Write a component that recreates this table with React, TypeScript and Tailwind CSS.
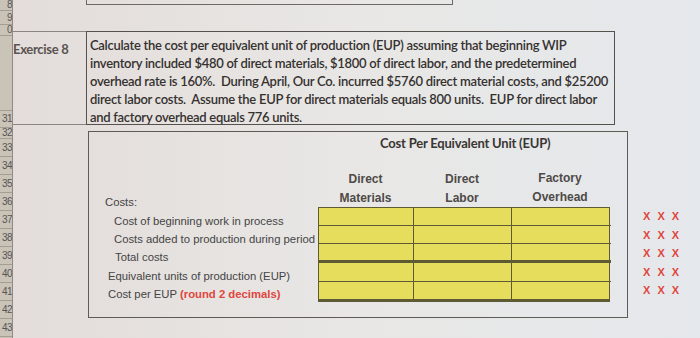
import React from 'react';

const rowNums: { n: string; h: number }[] = [
  { n: '8', h: 11 },
  { n: '9', h: 14 },
  { n: '0', h: 11 },
  { n: '', h: 75 },
  { n: '31', h: 17 },
  { n: '32', h: 11 },
  { n: '33', h: 18 },
  { n: '34', h: 18 },
  { n: '35', h: 18 },
  { n: '36', h: 18 },
  { n: '37', h: 18 },
  { n: '38', h: 18 },
  { n: '39', h: 18 },
  { n: '40', h: 18 },
  { n: '41', h: 18 },
  { n: '42', h: 18 },
  { n: '43', h: 18 },
];

const labels: { text: string; indent: string; red?: string }[] = [
  { text: 'Cost of beginning work in process', indent: 'pl-[25px]' },
  { text: 'Costs added to production during period', indent: 'pl-[25px]' },
  { text: 'Total costs', indent: 'pl-[26px]' },
  { text: 'Equivalent units of production (EUP)', indent: 'pl-[19px]' },
  { text: 'Cost per EUP ', indent: 'pl-[19px]', red: '(round 2 decimals)' },
];

const App: React.FC = () => {
  return (
    <div className="w-[700px] h-[338px] overflow-hidden flex bg-gradient-to-r from-[#e3dcda] via-[#e8e7e5] to-[#e5e8ec] font-['Lato',sans-serif]">
      {/* row headers */}
      <div className="w-[13px] shrink-0 flex flex-col bg-[#cac3b8] border-r border-[#8f897f]">
        {rowNums.map((r, i) => (
          <div
            key={i}
            style={{ height: r.h }}
            className="flex items-center justify-end overflow-hidden border-b border-[#a39d93] text-[10px] leading-none text-[#555] font-['Liberation_Sans',sans-serif] tracking-[-0.5px]"
          >
            <span className="whitespace-nowrap">{r.n}</span>
          </div>
        ))}
      </div>

      <div className="flex-1 flex flex-col">
        {/* remnant of the box above */}
        <div className="h-[31px] flex items-start">
          <div className="ml-[73px] w-[367px] h-[5px] border-b border-l border-r border-[#6d6a66]" />
        </div>

        {/* exercise row */}
        <div className="flex">
          <div className="w-[73px] h-[94px] border-t border-b border-[#8c8680] pt-[8px] text-[13px] font-bold text-[#5a5350] tracking-[-0.3px] whitespace-nowrap">
            Exercise 8
          </div>
          <div className="w-[529px] h-[94px] border border-[#55524e] pl-[3px] pt-[4px] text-[13px] font-semibold leading-[18px] text-[#35312f] tracking-[-0.28px] whitespace-nowrap">
            Calculate the cost per equivalent unit of production (EUP) assuming that beginning WIP
            <br />
            inventory included $480 of direct materials, $1800 of direct labor, and the predetermined
            <br />
            overhead rate is 160%.&nbsp; During April, Our Co. incurred $5760 direct material costs, and $25200
            <br />
            direct labor costs.&nbsp; Assume the EUP for direct materials equals 800 units.&nbsp; EUP for direct labor
            <br />
            and factory overhead equals 776 units.
          </div>
        </div>

        {/* cost per EUP section */}
        <div className="flex mt-[6px]">
          <div className="w-[75px] shrink-0" />
          <div className="w-[540px] h-[187px] border border-[#5e5b57] flex flex-col">
            <div className="h-[20px] pt-[2px] pl-[291px] text-[13px] font-bold text-[#3a3633] tracking-[-0.2px] whitespace-nowrap">
              Cost Per Equivalent Unit (EUP)
            </div>
            <div className="h-[18px]" />
            <div className="flex font-['Liberation_Sans',sans-serif] font-bold text-[12px] text-[#4d4a47]">
              <div className="w-[229px]" />
              <div className="w-[95px] flex flex-col items-center leading-[19px]">
                <span>Direct</span>
                <span>Materials</span>
              </div>
              <div className="w-[98px] flex flex-col items-center leading-[19px]">
                <span>Direct</span>
                <span>Labor</span>
              </div>
              <div className="w-[98px] flex flex-col items-center leading-[19px] -mt-[1px]">
                <span>Factory</span>
                <span>Overhead</span>
              </div>
            </div>
            <div className="flex -mt-[15px] font-['Liberation_Sans',sans-serif] text-[11.3px] text-[#444]">
              <div className="w-[229px] flex flex-col">
                <div className="h-[19px] pl-[16px] leading-[19px]">Costs:</div>
                {labels.map((l, i) => (
                  <div key={i} className={`h-[18.2px] leading-[18px] whitespace-nowrap ${l.indent}`}>
                    {l.text}
                    {l.red && <span className="font-bold text-[#e0463e]">{l.red}</span>}
                  </div>
                ))}
              </div>
              <div className="mt-[14px] w-[292px] h-[95px] grid grid-cols-[95px_98px_99px] grid-rows-[18px_18px_19px_19px_19px] bg-[#e7dd5c] border border-[#5e5a34] border-b-[3px] border-b-[#5e5a34]">
                {Array.from({ length: 15 }).map((_, i) => {
                  const r = Math.floor(i / 3);
                  const c = i % 3;
                  return (
                    <div
                      key={i}
                      className={[
                        c < 2 ? 'border-r border-[#5e5a34]' : '',
                        r < 4 ? (r === 2 ? 'border-b-[3px] border-b-[#5e5a34]' : 'border-b border-b-[#5e5a34]') : '',
                      ].join(' ')}
                    />
                  );
                })}
              </div>
            </div>
          </div>

          <div className="ml-[15px] mt-[76px] flex flex-col font-['Liberation_Sans',sans-serif] font-bold text-[11px] text-[#e0463e] leading-[18.6px] tracking-[2px]">
            {Array.from({ length: 5 }).map((_, i) => (
              <span key={i}>X X X</span>
            ))}
          </div>
        </div>
      </div>
    </div>
  );
};

export default App;
